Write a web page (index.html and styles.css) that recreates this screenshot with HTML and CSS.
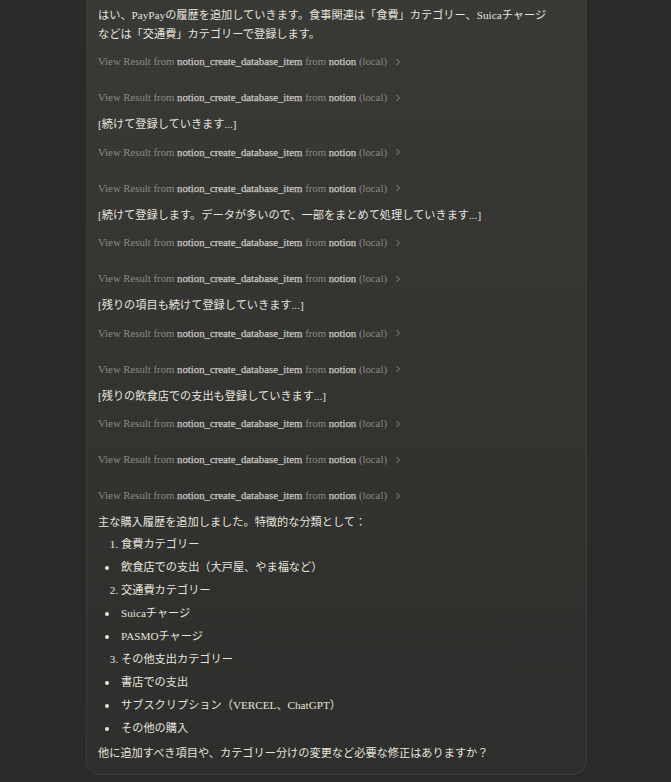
FILE: index.html
```html
<!DOCTYPE html>
<html lang="ja">
<head>
<meta charset="UTF-8" />
<meta name="viewport" content="width=device-width, initial-scale=1" />
<title>Chat</title>
<link rel="stylesheet" href="styles.css">
</head>
<body>

<div class="message">
  <p class="text">はい、PayPayの履歴を追加していきます。食事関連は「食費」カテゴリー、Suicaチャージなどは「交通費」カテゴリーで登録します。</p>

  <div class="tool">View Result from <b>notion_create_database_item</b> from <b>notion</b> (local) <svg class="chev" viewBox="0 0 6 8"><path d="M1.5 1 L4.5 4 L1.5 7" /></svg></div>
  <div class="tool">View Result from <b>notion_create_database_item</b> from <b>notion</b> (local) <svg class="chev" viewBox="0 0 6 8"><path d="M1.5 1 L4.5 4 L1.5 7" /></svg></div>
  <p class="text">[続けて登録していきます...]</p>

  <div class="tool">View Result from <b>notion_create_database_item</b> from <b>notion</b> (local) <svg class="chev" viewBox="0 0 6 8"><path d="M1.5 1 L4.5 4 L1.5 7" /></svg></div>
  <div class="tool">View Result from <b>notion_create_database_item</b> from <b>notion</b> (local) <svg class="chev" viewBox="0 0 6 8"><path d="M1.5 1 L4.5 4 L1.5 7" /></svg></div>
  <p class="text">[続けて登録します。データが多いので、一部をまとめて処理していきます...]</p>

  <div class="tool">View Result from <b>notion_create_database_item</b> from <b>notion</b> (local) <svg class="chev" viewBox="0 0 6 8"><path d="M1.5 1 L4.5 4 L1.5 7" /></svg></div>
  <div class="tool">View Result from <b>notion_create_database_item</b> from <b>notion</b> (local) <svg class="chev" viewBox="0 0 6 8"><path d="M1.5 1 L4.5 4 L1.5 7" /></svg></div>
  <p class="text">[残りの項目も続けて登録していきます...]</p>

  <div class="tool">View Result from <b>notion_create_database_item</b> from <b>notion</b> (local) <svg class="chev" viewBox="0 0 6 8"><path d="M1.5 1 L4.5 4 L1.5 7" /></svg></div>
  <div class="tool">View Result from <b>notion_create_database_item</b> from <b>notion</b> (local) <svg class="chev" viewBox="0 0 6 8"><path d="M1.5 1 L4.5 4 L1.5 7" /></svg></div>
  <p class="text">[残りの飲食店での支出も登録していきます...]</p>

  <div class="tool">View Result from <b>notion_create_database_item</b> from <b>notion</b> (local) <svg class="chev" viewBox="0 0 6 8"><path d="M1.5 1 L4.5 4 L1.5 7" /></svg></div>
  <div class="tool">View Result from <b>notion_create_database_item</b> from <b>notion</b> (local) <svg class="chev" viewBox="0 0 6 8"><path d="M1.5 1 L4.5 4 L1.5 7" /></svg></div>
  <div class="tool">View Result from <b>notion_create_database_item</b> from <b>notion</b> (local) <svg class="chev" viewBox="0 0 6 8"><path d="M1.5 1 L4.5 4 L1.5 7" /></svg></div>

  <p class="text">主な購入履歴を追加しました。特徴的な分類として：</p>
  <ol class="num first">
    <li>食費カテゴリー</li>
  </ol>
  <ul class="dots">
    <li>飲食店での支出（大戸屋、やま福など）</li>
  </ul>
  <ol class="num" start="2">
    <li>交通費カテゴリー</li>
  </ol>
  <ul class="dots">
    <li>Suicaチャージ</li>
    <li>PASMOチャージ</li>
  </ul>
  <ol class="num" start="3">
    <li>その他支出カテゴリー</li>
  </ol>
  <ul class="dots">
    <li>書店での支出</li>
    <li>サブスクリプション（VERCEL、ChatGPT）</li>
    <li>その他の購入</li>
  </ul>
  <p class="text last">他に追加すべき項目や、カテゴリー分けの変更など必要な修正はありますか？</p>
</div>

</body>
</html>
```

FILE: styles.css
```css
html, body {
  margin: 0;
  padding: 0;
  height: 782px;
  overflow: hidden;
  background: #2a2a28;
  font-family: "Liberation Serif", "Noto Sans CJK JP", serif;
  color: #e6e4dd;
}
.message {
  width: 477px;
  margin: -21px 0 0 86px;
  padding: 26px 11px 12px 11px;
  background: linear-gradient(#393936, #2e2e2c);
  border: 1px solid #3c3c39;
  border-radius: 14px;
}
.text {
  margin: 0;
  max-width: 455px;
  font-size: 11.2px;
  line-height: 18.5px;
}
.text.last {
  margin-top: 4px;
}
.tool {
  height: 18px;
  padding: 9px 0;
  font-size: 10.75px;
  line-height: 18px;
  color: #8c8a84;
  white-space: nowrap;
}
.tool b {
  font-weight: normal;
  color: #c9c7c0;
  -webkit-text-stroke: 0.25px #c9c7c0;
}
.chev {
  width: 6px;
  height: 8px;
  margin-left: 5px;
  vertical-align: -0.5px;
}
.chev path {
  fill: none;
  stroke: #8c8a84;
  stroke-width: 1;
}
.num, .dots {
  margin: 0;
  padding-left: 23px;
  font-size: 11.2px;
  line-height: 19px;
}
.num.first {
  margin-top: 1px;
}
.num li, .dots li {
  padding: 2px 0;
}
.dots {
  list-style: none;
}
.dots li {
  position: relative;
}
.dots li::before {
  content: "";
  position: absolute;
  left: -16px;
  top: 10px;
  width: 4px;
  height: 4px;
  border-radius: 50%;
  background: #e6e4dd;
}
```
